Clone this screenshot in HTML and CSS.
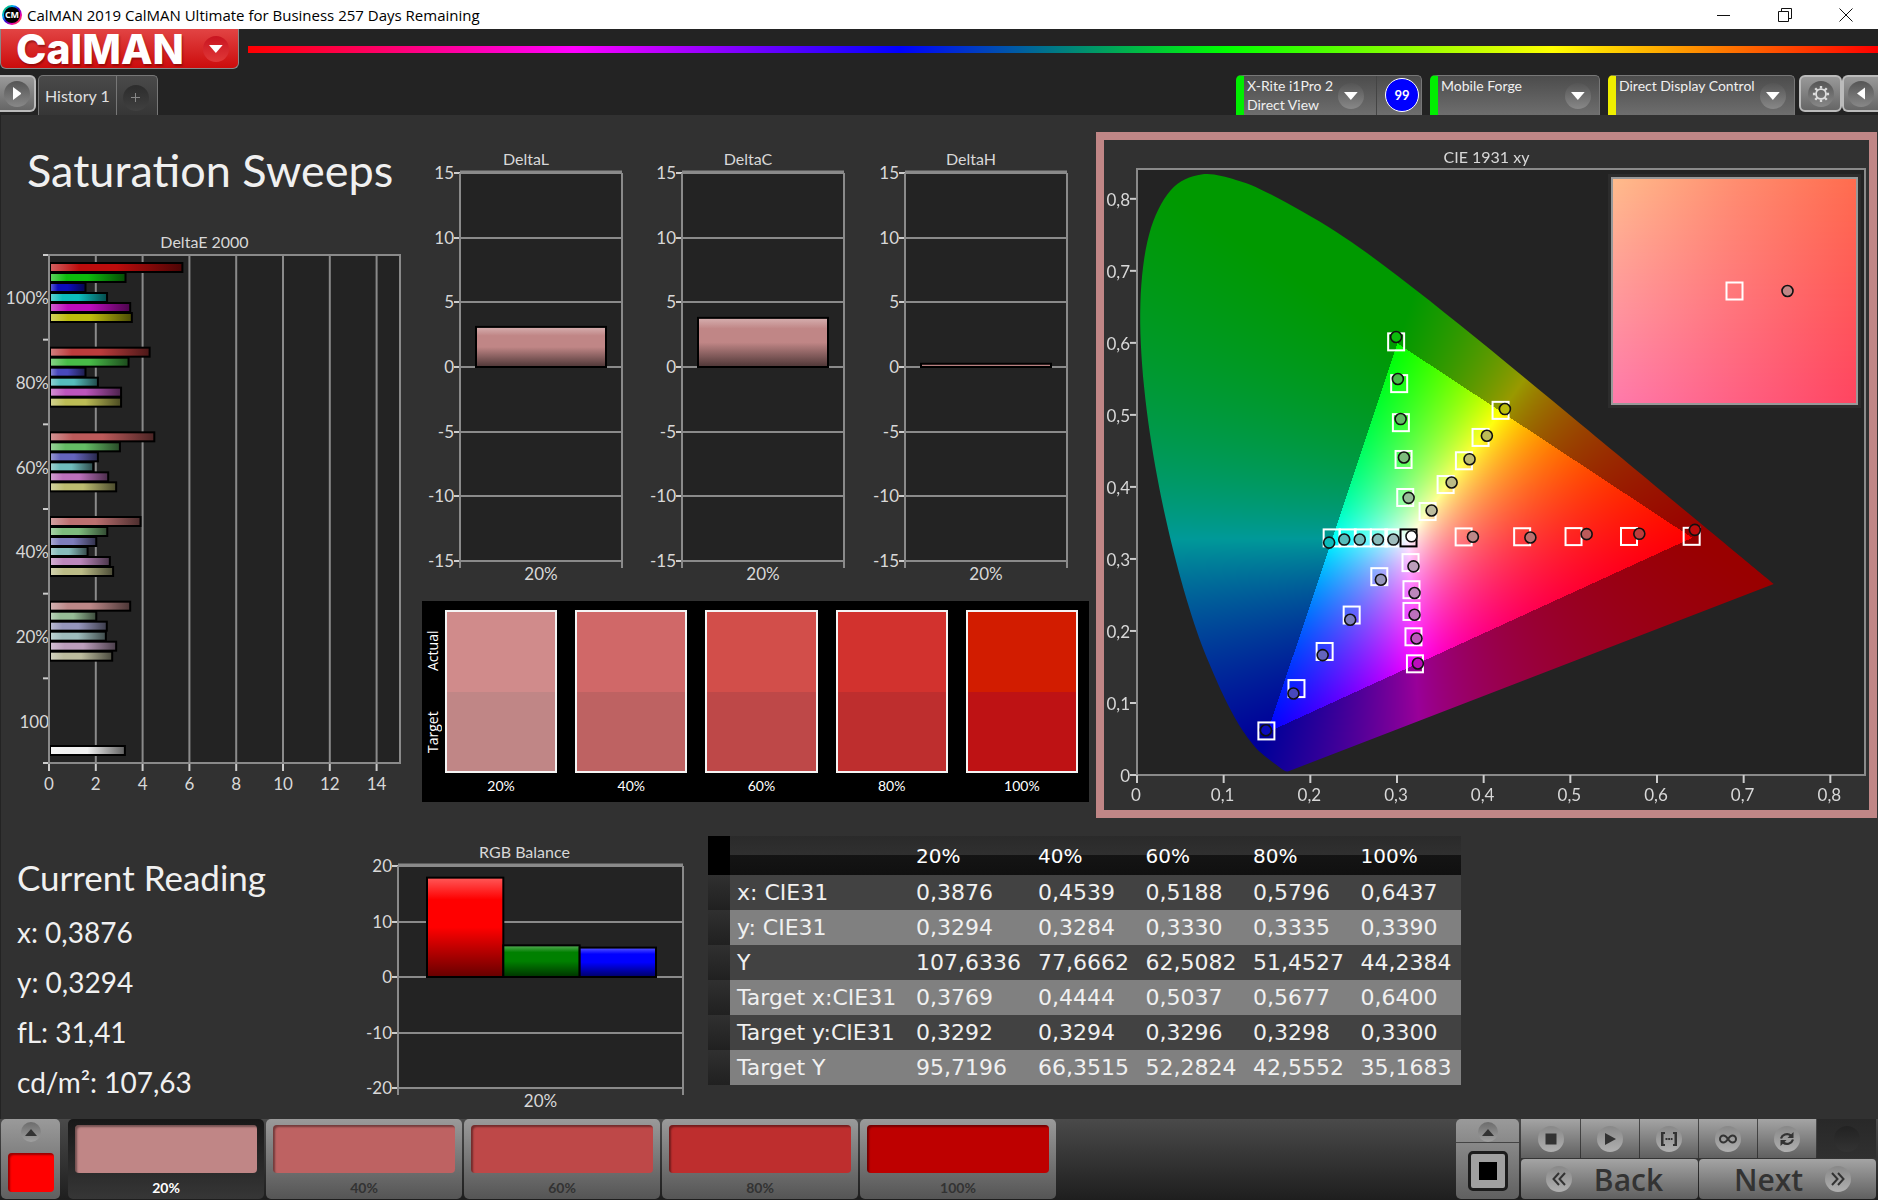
FILE: index.html
```html
<!DOCTYPE html>
<html lang="en">

<head>
    <meta charset="UTF-8">
    <meta name="viewport" content="width=device-width, initial-scale=1">
    <title>CalMAN 2019 CalMAN Ultimate for Business</title>
    <link rel="stylesheet" href="styles.css">
</head>
<body>
    <div class="titleBar">
        <svg class="appIcon" viewBox="0 0 20 20">
            <defs>
                <linearGradient id="ring" x1="0" y1="0" x2="1" y2="1">
                    <stop offset="0" stop-color="#0c3"/>
                    <stop offset="0.3" stop-color="#0af"/>
                    <stop offset="0.5" stop-color="#30c"/>
                    <stop offset="0.75" stop-color="#e0a"/>
                    <stop offset="1" stop-color="#f60"/>
                </linearGradient>
            </defs>
            <circle cx="10" cy="10" r="9" fill="#000" stroke="url(#ring)" stroke-width="2"/>
            <text x="10" y="13" text-anchor="middle" font-size="9">CM</text>
        </svg>
        <span class="appName">CalMAN 2019 CalMAN Ultimate for Business 257 Days Remaining</span>
        <div class="winButtons">
            <button aria-label="Minimize"><svg viewBox="0 0 14 14"><path d="M0 7.5H13"/></svg></button>
            <button aria-label="Restore"><svg viewBox="0 0 14 14"><path d="M0.5 3.5H10.5V13.5H0.5ZM3.5 3.5V0.5H13.5V10.5H10.5"/></svg></button>
            <button aria-label="Close"><svg viewBox="0 0 14 14"><path d="M0.5 0.5L13.5 13.5M13.5 0.5L0.5 13.5"/></svg></button>
        </div>
    </div>

    <header class="topBar">
        <div class="brandRow">
            <button class="brand">CalMAN <i class="knob red"><svg viewBox="0 0 12 7"><path d="M0 0H12L6 7Z"/></svg></i></button>
            <div class="rainbow"></div>
        </div>
        <div class="tabRow">
            <button class="side first" aria-label="Expand"><i class="knob"><svg viewBox="0 0 8 12"><path d="M0 0L8 6L0 12Z"/></svg></i></button>
            <div class="tabs">
                <button class="tab">History 1</button>
                <button class="tab add" aria-label="Add tab"><i class="knob dark"><svg viewBox="0 0 9 9"><path d="M4 0H5V4H9V5H5V9H4V5H0V4H4Z"/></svg></i></button>
            </div>
            <div class="devices">
                <div class="device meter">
                    <button class="deviceMenu"><span>X-Rite i1Pro 2<br>Direct View</span><i class="knob"><svg viewBox="0 0 12 7"><path d="M0 0H12L6 7Z"/></svg></i></button>
                    <button class="badge">99</button>
                </div>
                <div class="device source">
                    <button class="deviceMenu"><span>Mobile Forge</span><i class="knob"><svg viewBox="0 0 12 7"><path d="M0 0H12L6 7Z"/></svg></i></button>
                </div>
                <div class="device display">
                    <button class="deviceMenu"><span>Direct Display Control</span><i class="knob"><svg viewBox="0 0 12 7"><path d="M0 0H12L6 7Z"/></svg></i></button>
                </div>
            </div>
            <div class="sideGroup">
                <button class="side" aria-label="Settings"><i class="knob"><svg class="gear" viewBox="0 0 20 20"><circle cx="10" cy="10" r="5.5" fill="none" stroke="#ddd" stroke-width="2"/><path d="M10 1V4M10 16V19M1 10H4M16 10H19M3.6 3.6L5.8 5.8M14.2 14.2L16.4 16.4M3.6 16.4L5.8 14.2M14.2 5.8L16.4 3.6" stroke="#ddd" stroke-width="2.6"/></svg></i></button>
                <button class="side last" aria-label="Collapse"><i class="knob"><svg viewBox="0 0 8 12"><path d="M8 0L0 6L8 12Z"/></svg></i></button>
            </div>
        </div>
    </header>

    <main class="page">
        <div class="upper">
            <section class="sweeps">
                <h1>Saturation Sweeps</h1>
                <div class="chart" id="deltaE"></div>
            </section>
            <section class="deltas">
                <div class="deltaRow">
                    <div class="chart" id="deltaL"></div>
                    <div class="chart" id="deltaC"></div>
                    <div class="chart" id="deltaH"></div>
                </div>
                <div class="compare">
                    <div class="sides"><span>Actual</span><span>Target</span></div>
                    <div class="pair p20"><div class="swatch"></div>20%</div>
                    <div class="pair p40"><div class="swatch"></div>40%</div>
                    <div class="pair p60"><div class="swatch"></div>60%</div>
                    <div class="pair p80"><div class="swatch"></div>80%</div>
                    <div class="pair p100"><div class="swatch"></div>100%</div>
                </div>
            </section>
            <section class="cie">
                <div class="chart" id="cie"><canvas id="cieCanvas"></canvas></div>
            </section>
        </div>

        <div class="lower">
            <section class="reading">
                <h2>Current Reading</h2>
                <p>x: 0,3876</p>
                <p>y: 0,3294</p>
                <p>fL: 31,41</p>
                <p>cd/m²: 107,63</p>
            </section>
            <section class="balance">
                <div class="chart" id="rgb"></div>
            </section>
            <table class="data">
                <colgroup><col class="cSel"><col class="cName"><col class="cFirst"><col><col><col><col></colgroup>
                <thead>
                    <tr><td></td><td></td><th>20%</th><th>40%</th><th>60%</th><th>80%</th><th>100%</th></tr>
                </thead>
                <tbody>
                    <tr><td></td><th>x: CIE31</th><td>0,3876</td><td>0,4539</td><td>0,5188</td><td>0,5796</td><td>0,6437</td></tr>
                    <tr><td></td><th>y: CIE31</th><td>0,3294</td><td>0,3284</td><td>0,3330</td><td>0,3335</td><td>0,3390</td></tr>
                    <tr><td></td><th>Y</th><td>107,6336</td><td>77,6662</td><td>62,5082</td><td>51,4527</td><td>44,2384</td></tr>
                    <tr><td></td><th>Target x:CIE31</th><td>0,3769</td><td>0,4444</td><td>0,5037</td><td>0,5677</td><td>0,6400</td></tr>
                    <tr><td></td><th>Target y:CIE31</th><td>0,3292</td><td>0,3294</td><td>0,3296</td><td>0,3298</td><td>0,3300</td></tr>
                    <tr><td></td><th>Target Y</th><td>95,7196</td><td>66,3515</td><td>52,2824</td><td>42,5552</td><td>35,1683</td></tr>
                </tbody>
            </table>
        </div>
    </main>

    <footer class="bottomBar">
        <button class="colorPick" aria-label="Pattern color"><i class="knob small"><svg viewBox="0 0 12 7"><path d="M6 0L12 7H0Z"/></svg></i><span class="chip"></span></button>
        <div class="levels">
            <button class="level on"><span class="chip c20"></span>20%</button>
            <button class="level"><span class="chip c40"></span>40%</button>
            <button class="level"><span class="chip c60"></span>60%</button>
            <button class="level"><span class="chip c80"></span>80%</button>
            <button class="level"><span class="chip c100"></span>100%</button>
        </div>
        <div class="pattern">
            <button class="patternUp" aria-label="Pattern list"><i class="knob small"><svg viewBox="0 0 12 7"><path d="M6 0L12 7H0Z"/></svg></i></button>
            <button class="patternBox" aria-label="Window pattern"><span></span></button>
        </div>
        <div class="transport">
            <button aria-label="Stop"><i class="knob"><svg viewBox="0 0 12 12"><path d="M0.5 0.5H11.5V11.5H0.5Z"/></svg></i></button>
            <button aria-label="Play"><i class="knob"><svg viewBox="0 0 12 12"><path d="M1 0L12 6L1 12Z"/></svg></i></button>
            <button aria-label="Read series"><i class="knob"><svg class="wide" viewBox="0 0 18 14"><path d="M5 0H1V14H5V12H3.500V2H5ZM13 0H17V14H13V12H14.500V2H13ZM5.500 6H7.500V8H5.500ZM8.200 6H10V8H8.200ZM10.700 6H12.500V8H10.700Z"/></svg></i></button>
            <button aria-label="Read continuous"><i class="knob"><svg class="wide" viewBox="0 0 18 14"><path d="M9 7C7 4 6 3.500 4.500 3.500A3.500 3.500 0 0 0 4.500 10.500C6 10.500 7 10 9 7C11 4 12 3.500 13.500 3.500A3.500 3.500 0 0 1 13.500 10.500C12 10.500 11 10 9 7Z" fill="none" stroke="#333" stroke-width="2"/></svg></i></button>
            <button aria-label="Repeat"><i class="knob"><svg class="wide" viewBox="0 0 18 14"><path d="M3 6.500C4 3 9 0.500 13 3.500M15 7.500C14 11 9 13.500 5 10.500" fill="none" stroke="#333" stroke-width="2.200"/><path d="M15.500 0V6H9.500ZM2.500 14V8H8.500Z"/></svg></i></button>
            <button class="off" aria-label="Record" disabled><i class="knob dark"></i></button>
            <button class="nav back"><i class="knob"><svg class="wide" viewBox="0 0 18 14"><path d="M9 1L3.500 7L9 13M15 1L9.500 7L15 13" fill="none" stroke="#333" stroke-width="2"/></svg></i>Back</button>
            <button class="nav next">Next<i class="knob"><svg class="wide" viewBox="0 0 18 14"><path d="M3 1L8.500 7L3 13M9 1L14.500 7L9 13" fill="none" stroke="#333" stroke-width="2"/></svg></i></button>
        </div>
    </footer>
    <script src="charts.js"></script>
</body>

</html>
```

FILE: styles.css
```css
*{
    box-sizing:border-box;
}
body{
    margin:0;
    min-height:100vh;
    display:flex;
    flex-direction:column;
    background:#232323;
    color:#f0f0f0;
    font-family:Lato, sans-serif;
    font-size:16px;
}
button{
    margin:0;
    padding:0;
    border:none;
    background:none;
    color:inherit;
    font:inherit;
}
svg{
    display:block;
}

/* round inset behind every small icon */
.knob{
    display:flex;
    flex:none;
    align-items:center;
    justify-content:center;
    width:26px;
    height:26px;
    border-radius:50%;
    background:linear-gradient(#555, #888);
}
.knob svg{
    height:8px;
    fill:#fff;
}
.knob.red{
    background:linear-gradient(#c81420, #e03838);
}
.knob.dark{
    background:linear-gradient(#2c2c2c, #404040);
}
.knob.dark svg{
    height:9px;
    fill:#888;
}
.knob.small{
    width:20px;
    height:20px;
    background:linear-gradient(#6c6c6c, #a0a0a0);
}

/* window title */
.titleBar{
    display:flex;
    align-items:center;
    height:29px;
    padding-left:2px;
    background:#fff;
    color:#000;
    font-family:"Open Sans", sans-serif;
    font-size:15px;
}
.appIcon{
    width:20px;
    height:20px;
    margin-right:5px;
    fill:#fff;
    font-weight:700;
}
.winButtons{
    display:flex;
    margin-left:auto;
    padding-right:25px;
    gap:47px;
}
.winButtons svg{
    width:14px;
    height:14px;
    fill:none;
    stroke:#111;
}

/* header */
.brandRow{
    display:flex;
    height:46px;
    gap:9px;
}
.brand{
    display:flex;
    align-items:center;
    justify-content:space-between;
    width:239px;
    height:40px;
    padding:0 9px 0 15px;
    border:solid 1px #888;
    border-top:none;
    border-radius:0 0 6px 6px;
    background:linear-gradient(#e24444, #cc0c0c);
    color:#fff;
    font-family:Inter, sans-serif;
    font-size:41px;
    font-weight:800;
    line-height:38px;
    text-shadow:1px 2px 2px #6008;
}
.rainbow{
    flex:1;
    height:7px;
    margin-top:17px;
    background:linear-gradient(90deg, #f00, #f0f 20%, #00f 40%, #0f0 60%, #ff0 80%, #f00);
}
.tabRow{
    display:flex;
    height:40px;
}
.side{
    display:flex;
    align-items:center;
    justify-content:center;
    width:43px;
    height:37px;
    border:solid 2px #bbb;
    border-radius:6px;
    background:linear-gradient(#999, #666);
}
.side svg{
    height:13px;
}
.side .gear{
    width:18px;
    height:18px;
}
.side.first{
    width:36px;
    border-left:none;
    border-radius:0 6px 6px 0;
}
.side.last{
    width:36px;
    border-right:none;
    border-radius:6px 0 0 6px;
}
.tabs{
    display:flex;
    margin-left:2px;
    border:solid 1px #777;
    border-bottom:none;
    border-radius:5px 5px 0 0;
    background:linear-gradient(#4a4a4a, #363636);
    color:#e0e0e0;
}
.tab{
    padding:0 6px;
}
.tab.add{
    padding:4px 8px 0 6px;
    border-left:solid 1px #777;
}
.devices{
    display:flex;
    gap:8px;
    margin-left:auto;
    font-size:14px;
    line-height:19px;
}
.device{
    display:flex;
    width:170px;
    overflow:hidden;
    border:solid 1px #777;
    border-bottom:none;
    border-left:solid 8px #0e0;
    border-radius:5px 5px 0 0;
    background:linear-gradient(#4c4c4c, #6e6e6e);
}
.device.meter{
    width:186px;
}
.device.display{
    width:187px;
    border-left-color:#ee0;
}
.deviceMenu{
    display:flex;
    flex:1;
    justify-content:space-between;
    padding:0 8px 0 3px;
    text-align:left;
    white-space:nowrap;
}
.deviceMenu .knob{
    margin-top:7px;
}
.meter .deviceMenu{
    padding-right:12px;
    border-right:solid 1px #444;
}
.badge{
    flex:none;
    width:34px;
    height:34px;
    margin:2px 2px 0 8px;
    border:solid 1px #fff;
    border-radius:50%;
    background:#00f;
    color:#fff;
    font-size:13px;
    font-weight:700;
}
.sideGroup{
    display:flex;
    margin-left:4px;
}

/* page */
.page{
    flex:1;
    display:flex;
    flex-direction:column;
    background:#313131;
    border-left:solid 1px #232323;
}
.upper{
    flex:704 0 0px;
    display:grid;
    grid-template-columns:421fr 667fr 789fr;
}
.lower{
    flex:300 0 0px;
    display:grid;
    grid-template-columns:357fr 350fr 753fr 417fr;
}
section{
    display:flex;
    flex-direction:column;
    min-width:0;
}
.chart{
    position:relative;
    flex:1;
    min-width:0;
    min-height:200px;
}
.chart svg, .chart canvas{
    position:absolute;
    left:0;
    top:0;
    width:100%;
    height:100%;
}
.chart text{
    fill:#d8d8d8;
    font-size:17px;
}
.chart .title{
    font-size:16px;
}
h1{
    margin:0;
    padding-left:26px;
    font-size:45px;
    font-weight:400;
    line-height:110px;
    height:116px;
}
.deltas{
    padding:33px 0 17px;
}
.deltaRow{
    flex:1;
    display:grid;
    grid-template-columns:repeat(3, 1fr);
}
.compare{
    display:grid;
    grid-template-columns:5px repeat(5, 1fr);
    column-gap:18px;
    padding:9px 11px 4px 0;
    background:#000;
    color:#fff;
    font-size:14px;
}
.sides{
    display:flex;
    flex-direction:row-reverse;
    justify-content:space-around;
    width:22px;
    height:163px;
    writing-mode:vertical-rl;
    transform:rotate(180deg);
    font-family:"Open Sans", sans-serif;
    line-height:22px;
}
.pair{
    text-align:center;
    line-height:25px;
}
.swatch{
    height:163px;
    border:solid 2px #f4f4f4;
}
.p20 .swatch{
    background:linear-gradient(#d08b8b 50%, #c08686 50%);
}
.p40 .swatch{
    background:linear-gradient(#d06868 50%, #be6262 50%);
}
.p60 .swatch{
    background:linear-gradient(#d24e4a 50%, #be4848 50%);
}
.p80 .swatch{
    background:linear-gradient(#d2322e 50%, #be2e2e 50%);
}
.p100 .swatch{
    background:linear-gradient(#d21c00 50%, #be1214 50%);
}
.cie{
    margin:17px 1px 1px 7px;
    border:solid 8px #c08686;
}
.reading{
    padding:32px 0 0 16px;
}
h2{
    margin:0;
    padding-bottom:4px;
    font-size:35px;
    font-weight:400;
    line-height:52px;
}
.reading p{
    margin:0;
    font-size:28px;
    line-height:50px;
}
.balance{
    padding-top:24px;
}

/* readings table */
.data{
    align-self:start;
    width:100%;
    margin-top:17px;
    border-collapse:collapse;
    table-layout:fixed;
    font-family:"DejaVu Sans", sans-serif;
    font-size:22px;
    white-space:nowrap;
}
.cSel{
    width:22px;
}
.cName{
    width:179px;
}
.cFirst{
    width:122px;
}
.data th{
    font-weight:400;
}
.data th, .data td{
    height:35px;
    padding:0 0 0 7px;
    text-align:left;
    line-height:32px;
}
.data thead tr{
    background:linear-gradient(#2a2a2a, #303030 50%, #141414 50%, #101010);
    color:#fff;
    font-size:20px;
}
.data thead th, .data thead td{
    height:39px;
}
.data thead td:first-child{
    background:#000;
}
.data tbody tr{
    background:#424242;
}
.data tbody tr:nth-child(even){
    background:#808080;
}
.data tbody td:first-child{
    background:linear-gradient(#303030, #202020);
}

/* bottom bar */
.bottomBar{
    display:flex;
    height:81px;
    padding:0 2px 1px 1px;
    background:linear-gradient(#4a4a4a, #1e1e1e);
    color:#333;
}
.bottomBar .knob svg{
    height:12px;
    fill:#333;
}
.bottomBar .knob.small svg{
    height:7px;
}
.bottomBar .knob .wide{
    height:14px;
}
.chip{
    display:block;
    border-radius:4px;
    box-shadow:inset 2px 2px 2px #0006;
}
.colorPick{
    display:flex;
    flex-direction:column;
    align-items:center;
    justify-content:space-between;
    width:59px;
    padding:3px 0 7px;
    border-radius:5px;
    background:linear-gradient(#9a9a9a, #606060);
}
.colorPick .chip{
    width:46px;
    height:39px;
    background:#f00;
}
.levels{
    display:flex;
    gap:2px;
    width:988px;
    margin-left:8px;
}
.level{
    flex:1;
    padding:6px 7px 0;
    border-radius:5px;
    background:linear-gradient(#9a9a9a, #555);
    font-size:14px;
    font-weight:700;
    line-height:30px;
}
.level .chip{
    height:48px;
}
.level.on{
    background:linear-gradient(#181818, #363636);
    color:#fff;
}
.c20{
    background:#c08686;
}
.c40{
    background:#be6262;
}
.c60{
    background:#be4848;
}
.c80{
    background:#be2e2e;
}
.c100{
    background:#be0000;
}
.pattern{
    display:flex;
    flex-direction:column;
    width:63px;
    margin-left:auto;
    border-radius:5px;
    background:linear-gradient(#9a9a9a, #606060);
}
.patternUp{
    display:flex;
    justify-content:center;
    height:24px;
    padding-top:3px;
    border-bottom:solid 1px #444;
}
.patternBox{
    display:flex;
    align-items:center;
    justify-content:center;
    width:40px;
    height:40px;
    margin:8px auto;
    border:solid 3px #1c1c1c;
    border-radius:5px;
    background:#a0a0a0;
}
.patternBox span{
    width:18px;
    height:18px;
    background:#000;
}
.transport{
    display:grid;
    grid-template-columns:59px repeat(4, 58px) 59px;
    grid-template-rows:39px 40px;
    column-gap:1px;
    row-gap:1px;
    margin-left:2px;
}
.transport button{
    display:flex;
    align-items:center;
    justify-content:center;
    background:linear-gradient(#a4a4a4, #606060);
}
.transport .knob{
    background:linear-gradient(#888, #b0b0b0);
}
.transport .off{
    background:linear-gradient(#282828, #303030);
}
.transport .off .knob{
    background:linear-gradient(#222, #333);
}
.transport .nav{
    grid-column:span 3;
    gap:22px;
    padding-right:10px;
    font-family:"Open Sans", sans-serif;
    font-size:30px;
    font-weight:600;
    border-radius:4px;
}
.transport .next{
    padding:0 0 0 10px;
}
```

FILE: charts.js
```js
const NS='http://www.w3.org/2000/svg';

const add=(parent,name,attrs,text)=>{
    const el=document.createElementNS(NS,name);
    for(const k in attrs) el.setAttribute(k,attrs[k]);
    if(text!==undefined) el.textContent=text;
    parent.appendChild(el);
    return el;
};

const mix=(c,t,k)=>c.map((v,i)=>Math.round(v+(t[i]-v)*k));
const rgb=c=>'rgb('+c.join(',')+')';

//glossy bar fill, light at the start and dark at the end
let gradCount=0;
const gloss=(svg,c,vertical)=>{
    const id='g'+(gradCount++);
    const g=add(svg,'linearGradient',{id:id,x1:0,y1:0,x2:vertical?0:1,y2:vertical?1:0});
    add(g,'stop',{offset:0,'stop-color':rgb(mix(c,[255,255,255],0.35))});
    add(g,'stop',{offset:0.22,'stop-color':rgb(c)});
    add(g,'stop',{offset:0.5,'stop-color':rgb(c)});
    add(g,'stop',{offset:1,'stop-color':rgb(mix(c,[0,0,0],0.6))});
    return 'url(#'+id+')';
};

const start=(id)=>{
    const box=document.getElementById(id);
    const old=box.querySelector('svg');
    if(old) old.remove();
    const svg=add(box,'svg',{});
    return {box:box,svg:svg,w:box.clientWidth,h:box.clientHeight};
};

const line=(svg,x1,y1,x2,y2,col,wd)=>{
    add(svg,'line',{x1:x1,y1:y1,x2:x2,y2:y2,stroke:col||'#8a8a8a','stroke-width':wd||2});
};
const label=(svg,x,y,anchor,s,cls)=>{
    add(svg,'text',{x:x,y:y+6,'text-anchor':anchor,'class':cls||'tick'},s);
};

//-------------------------------------------
//DeltaE 2000, horizontal bars
const hues=[[1,0,0],[0,1,0],[0,0,1],[0,1,1],[1,0,1],[1,1,0]];
//how grey each hue gets, from 100% down to 20%
const redLow=[12,60,90,112,136];
const primLow=[12,72,100,125,150];
const secLow=[12,85,112,135,158];
const shade=(k,i)=>{
    const low=(k==0?redLow:k<3?primLow:secLow)[i];
    return hues[k].map(v=>v?188:low);
};
const sweeps=[
    ['100%',[5.7,3.27,1.56,2.48,3.47,3.54]],
    ['80%',[4.3,3.4,1.56,2.09,3.08,3.08]],
    ['60%',[4.5,3.03,2.09,1.89,2.53,2.87]],
    ['40%',[3.91,2.49,2.02,1.65,2.6,2.74]],
    ['20%',[3.47,2.02,2.47,2.43,2.87,2.7]],
    ['100',[]]
];

const drawDeltaE=()=>{
    const {svg,w,h}=start('deltaE');
    const l=48, t=24, r=w-22, b=h-56;
    const ux=(r-l)/15, gh=(b-t)/6;
    label(svg,(8+r)/2,11,'middle','DeltaE 2000','title');
    add(svg,'rect',{x:l,y:t,width:r-l,height:b-t,fill:'#232323'});
    for(let v=0;v<=14;v+=2){
        line(svg,l+v*ux,t,l+v*ux,b,'#8a8a8a');
        line(svg,l+v*ux,b,l+v*ux,b+8,'#ccc');
        label(svg,l+v*ux,b+21,'middle',v);
    }
    sweeps.forEach((s,i)=>{
        const top=t+i*gh;
        line(svg,l-6,top,l,top,'#ccc');
        label(svg,l,top+gh/2+1,'end',s[0]);
        s[1].forEach((v,k)=>{
            add(svg,'rect',{x:l+1,y:top+8+k*10,width:v*ux-1,height:9,fill:gloss(svg,shade(k,i)),stroke:'#000','stroke-width':2});
        });
    });
    add(svg,'rect',{x:l+1,y:b-17,width:3.2*ux,height:9,fill:gloss(svg,[240,240,240]),stroke:'#000','stroke-width':2});
    line(svg,l-6,b,l,b,'#ccc');
    add(svg,'rect',{x:l,y:t,width:r-l,height:b-t,fill:'none',stroke:'#8a8a8a','stroke-width':2});
};

//-------------------------------------------
//vertical bar charts
const drawColumns=(id,title,max,step,l,rPad,t,bPad,inset,bars)=>{
    const {svg,w,h}=start(id);
    const r=w-rPad, b=h-bPad;
    const uy=(b-t)/(max*2), zero=(t+b)/2;
    label(svg,(8+r)/2,t-14,'middle',title,'title');
    add(svg,'rect',{x:l,y:t,width:r-l,height:b-t,fill:'#232323'});
    for(let v=-max;v<=max;v+=step){
        const y=Math.round(zero-v*uy);
        line(svg,l,y,r,y);
        line(svg,l-6,y,l,y,'#ccc');
        label(svg,l-6,y,'end',v);
    }
    line(svg,l,t-1,r,t-1,'#8a8a8a',3);
    line(svg,l,t,l,b+7);
    line(svg,r,t,r,b+7);
    const bw=(r-l-inset[0]-inset[1])/bars.length;
    bars.forEach((d,i)=>{
        add(svg,'rect',{x:l+inset[0]+i*bw,y:zero-d[0]*uy,width:bw,height:d[0]*uy,fill:gloss(svg,d[1],true),stroke:'#000','stroke-width':2});
    });
    label(svg,(l+r)/2,b+13,'middle','20%');
};

//-------------------------------------------
//CIE 1931 xy
const locus=[[.1741,.005],[.1714,.0051],[.1689,.0069],[.1644,.0109],[.1566,.0177],[.144,.0297],[.1355,.0399],[.1241,.0578],[.1096,.0868],[.0913,.1327],[.0687,.2007],[.0454,.295],[.0235,.4127],[.0082,.5384],[.0039,.6548],[.0139,.7502],[.0389,.812],[.0743,.8338],[.1142,.8262],[.1547,.8059],[.2296,.7543],[.3016,.6923],[.3731,.6245],[.4441,.5547],[.5125,.4866],[.5752,.4242],[.627,.3725],[.6658,.334],[.6915,.3083],[.719,.2809],[.7347,.2653]];

//target x,y then measured x,y from 100% down to 20%
const points=[
    [[.64,.33,.6437,.339],[.5677,.3298,.5796,.3335],[.5037,.3296,.5188,.333],[.4444,.3294,.4539,.3284],[.3769,.3292,.3876,.3294]],
    [[.299,.6,.299,.6068],[.3025,.542,.301,.5484],[.3045,.4878,.3042,.4928],[.3076,.4367,.308,.4395],[.3095,.3839,.3134,.3834]],
    [[.1493,.0598,.1487,.0608],[.184,.1186,.1805,.1117],[.2165,.1701,.2142,.1651],[.2477,.2207,.246,.2142],[.2796,.274,.2814,.2698]],
    [[.2246,.3278,.2217,.3213],[.2431,.3278,.2391,.3255],[.2606,.3278,.257,.3255],[.2791,.3278,.278,.3255],[.2958,.3278,.2958,.3255]],
    [[.3207,.153,.3241,.1534],[.319,.1905,.3225,.1882],[.3167,.2257,.3202,.2211],[.3167,.2559,.3202,.2513],[.3156,.2935,.319,.2883]],
    [[.4195,.5049,.4245,.5067],[.3964,.4673,.4037,.4697],[.3772,.4349,.3837,.4371],[.3561,.4019,.363,.4047],[.3353,.3644,.3399,.3658]]
];

const side=(x,y,a,b)=>(b[0]-a[0])*(y-a[1])-(b[1]-a[1])*(x-a[0]);
const inGamut=(x,y)=>{
    const R=[.64,.33],G=[.3,.6],B=[.15,.06];
    return side(x,y,R,G)>=0&&side(x,y,G,B)>=0&&side(x,y,B,R)>=0;
};
//linear rgb scaled to full, dimmed outside the Rec.709 triangle
const xyColor=(x,y)=>{
    const X=x/y, Z=(1-x-y)/y;
    let c=[3.2406*X-1.5372-.4986*Z, -.9689*X+1.8758+.0415*Z, .0557*X-.204+1.057*Z];
    c=c.map(v=>Math.max(0,v));
    const m=Math.max(...c)||1;
    const k=inGamut(x,y)?255:153;
    return c.map(v=>v/m*k);
};

const drawCie=()=>{
    const {svg,w,h}=start('cie');
    const l=33, t=29, r=w-4, b=h-35;
    const ux=(r-l)/.84, uy=(b-t)/.8414;
    const px=x=>l+x*ux, py=y=>b-y*uy;

    const cv=document.getElementById('cieCanvas');
    cv.width=w;
    cv.height=h;
    const ctx=cv.getContext('2d');
    ctx.fillStyle='#232323';
    ctx.fillRect(l,t,r-l,b-t);

    const off=document.createElement('canvas');
    off.width=w;
    off.height=h;
    const octx=off.getContext('2d');
    const img=octx.createImageData(w,h);
    for(let j=0;j<h;j++){
        for(let i=0;i<w;i++){
            const c=xyColor((i-l)/ux,Math.max(.001,(b-j)/uy));
            const o=(j*w+i)*4;
            img.data[o]=c[0];
            img.data[o+1]=c[1];
            img.data[o+2]=c[2];
            img.data[o+3]=255;
        }
    }
    octx.putImageData(img,0,0);

    //clip to a smooth curve through the locus
    ctx.save();
    ctx.beginPath();
    ctx.moveTo(px(locus[0][0]),py(locus[0][1]));
    for(let i=0;i<locus.length-1;i++){
        const p0=locus[Math.max(0,i-1)], p1=locus[i], p2=locus[i+1], p3=locus[Math.min(locus.length-1,i+2)];
        ctx.bezierCurveTo(
            px(p1[0]+(p2[0]-p0[0])/6),py(p1[1]+(p2[1]-p0[1])/6),
            px(p2[0]-(p3[0]-p1[0])/6),py(p2[1]-(p3[1]-p1[1])/6),
            px(p2[0]),py(p2[1]));
    }
    ctx.closePath();
    ctx.clip();
    ctx.drawImage(off,0,0);
    ctx.restore();

    //magnified corner view
    const iw=245, ih=226, ix=r-8-iw, iy=t+9;
    ctx.fillStyle='#2c2c2c';
    ctx.fillRect(ix-4,iy-4,iw+8,ih+8);
    const tl=[255,188,140], tr=[255,108,78], bl=[255,122,172], br=[255,68,96];
    for(let j=0;j<ih;j++){
        const g=ctx.createLinearGradient(ix,0,ix+iw,0);
        g.addColorStop(0,rgb(mix(tl,bl,j/ih)));
        g.addColorStop(.5,rgb(mix([255,142,112],[255,96,132],j/ih)));
        g.addColorStop(1,rgb(mix(tr,br,j/ih)));
        ctx.fillStyle=g;
        ctx.fillRect(ix,iy+j,iw,1);
    }
    add(svg,'rect',{x:ix,y:iy,width:iw,height:ih,fill:'none',stroke:'#999','stroke-width':2});

    const target=(x,y,col)=>add(svg,'rect',{x:x-8,y:y-8.5,width:16,height:17,fill:'none',stroke:col||'#fff','stroke-width':2});
    const actual=(x,y,c)=>add(svg,'circle',{cx:x,cy:y,r:5.5,fill:rgb(c),stroke:'#111','stroke-width':1.6});
    points.forEach((set,k)=>{
        set.forEach(p=>target(px(p[0]),py(p[1])-1));
        set.forEach((p,i)=>actual(px(p[2]),py(p[3])-1,shade(k,i)));
    });
    target(px(.3133),py(.3278)-1,'#000');
    actual(px(.3167),py(.33)-1,[255,255,255]);
    target(ix+iw/2,iy+ih/2);
    actual(ix+iw/2+53,iy+ih/2,[192,134,134]);

    label(svg,(4+r)/2,17,'middle','CIE 1931 xy','title');
    add(svg,'rect',{x:l,y:t,width:r-l,height:b-t,fill:'none',stroke:'#8a8a8a','stroke-width':2});
    for(let i=0;i<=8;i++){
        const s=i?'0,'+i:'0';
        line(svg,px(i/10),b,px(i/10),b+8,'#ccc');
        label(svg,px(i/10)-1,b+20,'middle',s);
        line(svg,l-7,py(i/10),l-1,py(i/10),'#ccc');
        label(svg,l-7,py(i/10)+1,'end',s);
    }
};

const drawAll=()=>{
    const pink=[192,134,134];
    drawDeltaE();
    drawColumns('deltaL','DeltaL',15,5,38,22,25,40,[16,16],[[3.1,pink]]);
    drawColumns('deltaC','DeltaC',15,5,38,22,25,40,[16,16],[[3.8,pink]]);
    drawColumns('deltaH','DeltaH',15,5,38,22,25,40,[16,16],[[0.25,pink]]);
    drawColumns('rgb','RGB Balance',20,10,40,25,23,31,[29,27],[[17.9,[255,0,0]],[5.7,[0,128,0]],[5.3,[0,0,255]]]);
    drawCie();
};
drawAll();
addEventListener('resize',drawAll);
```
